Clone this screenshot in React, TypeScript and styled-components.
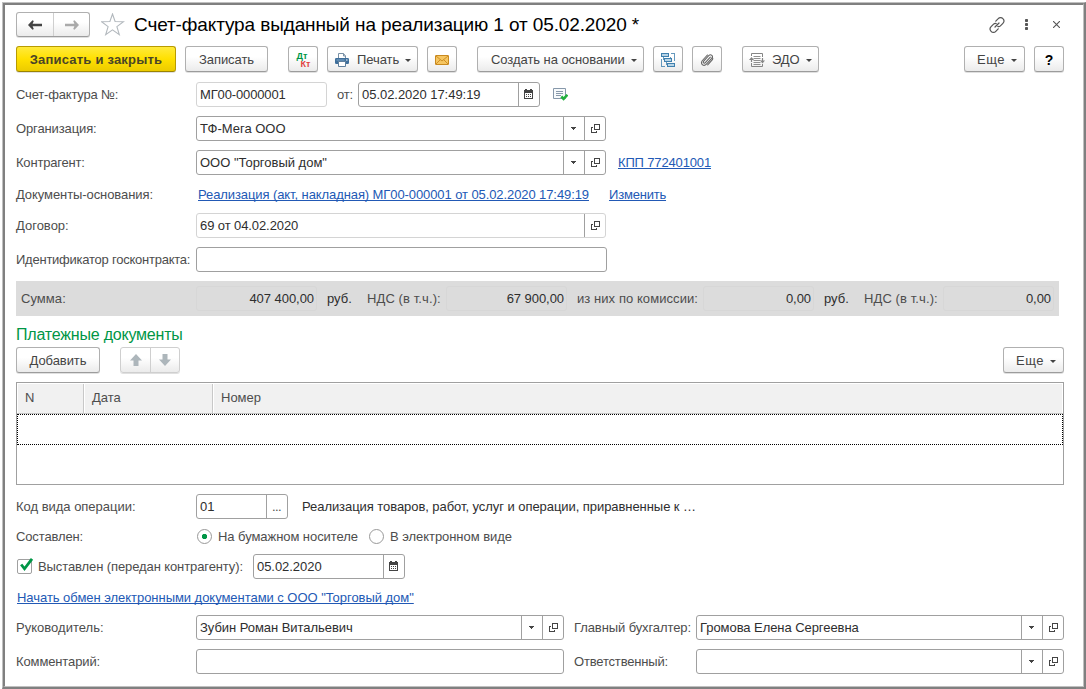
import React from "react";
import styled, { createGlobalStyle, css } from "styled-components";

const GlobalStyle = createGlobalStyle`
  * { box-sizing: border-box; }
  body { margin: 0; background: #fff; }
  button { font: inherit; color: inherit; padding: 0; margin: 0; }
`;

const LINE = "#a0a0a0";
const GREEN = "#009646";

const Page = styled.div`
  width: 1086px;
  height: 689px;
  padding: 2px 0 0 2px;
  background: #fff;
  font: 13px/16px "Liberation Sans", Arial, sans-serif;
  color: #4d4d4d;
  white-space: nowrap;
  overflow: hidden;
`;

const OuterBevel = styled.div`
  height: 100%;
  border-style: solid;
  border-width: 1px 2px 2px 1px;
  border-color: #c0c0c0 #808080 #808080 #c0c0c0;
`;

const InnerBevel = styled.div`
  height: 100%;
  border-style: solid;
  border-width: 2px 1px 1px 2px;
  border-color: #808080 #c0c0c0 #c0c0c0 #808080;
  padding: 7px 19px 0 11px;
  display: flex;
  flex-direction: column;
`;

const Text = styled.span<{ $ls?: number; $dark?: boolean }>`
  letter-spacing: ${(p) => p.$ls ?? -0.06}px;
  ${(p) => p.$dark && "color: #2e2e2e;"}
`;

const Row = styled.div<{ $h?: number; $top?: number; $drop?: number }>`
  display: flex;
  align-items: center;
  flex: none;
  height: ${(p) => p.$h ?? 25}px;
  margin-top: ${(p) => p.$top ?? 0}px;
  padding-top: ${(p) => p.$drop ?? 0}px;
`;

const Spacer = styled.div`
  flex: 1;
`;

const Gap = styled.div<{ $w: number }>`
  flex: none;
  width: ${(p) => p.$w}px;
`;

const Label = styled(Text)<{ $w?: number }>`
  flex: none;
  width: ${(p) => p.$w ?? 180}px;
`;

const Title = styled.h1`
  margin: 0 0 0 9px;
  font-size: 19px;
  font-weight: 400;
  line-height: 24px;
  letter-spacing: -0.12px;
  color: #000;
`;

const buttonFace = css`
  border: 1px solid #b0b0b0;
  border-bottom-color: #9c9c9c;
  border-radius: 3px;
  background: linear-gradient(#fff 0%, #fff 40%, #ebebeb 100%);
  box-shadow: 0 1px 0 rgba(0, 0, 0, 0.12);
`;

const Button = styled.button<{ $w: number; $primary?: boolean; $pad?: number }>`
  ${buttonFace}
  flex: none;
  display: flex;
  align-items: center;
  justify-content: ${(p) => (p.$pad === undefined ? "center" : "flex-start")};
  width: ${(p) => p.$w}px;
  height: 26px;
  padding: 1px 0 0 ${(p) => p.$pad ?? 0}px;
  color: #444;
  ${(p) =>
    p.$primary &&
    css`
      border-color: #b89b00;
      border-bottom-color: #9b8300;
      background: linear-gradient(#ffea3c 0%, #ffe000 50%, #eccb00 100%);
      font-weight: 700;
      color: #4a4528;
    `}
`;

const Split = styled.div<{ $w: number; $h: number; $soft?: boolean }>`
  ${buttonFace}
  ${(p) => p.$soft && "border-color: #cfcfcf;"}
  flex: none;
  display: grid;
  grid-template-columns: 1fr 1fr;
  width: ${(p) => p.$w}px;
  height: ${(p) => p.$h}px;
`;

const SplitPart = styled.button`
  border: 0;
  background: none;
  display: flex;
  align-items: center;
  justify-content: center;
  & + & {
    border-left: 1px solid #cfcfcf;
  }
`;

const Arrow = styled.i<{ $left: number }>`
  flex: none;
  margin: 2px 0 0 ${(p) => p.$left}px;
  border: 3px solid transparent;
  border-top-color: #444;
  border-bottom: 0;
`;

const Help = styled.b`
  font-size: 14px;
  color: #000;
`;

const DtKt = styled.div`
  display: flex;
  flex-direction: column;
  width: 17px;
  margin-right: 2px;
  font: 700 9px/8px "Liberation Sans", Arial, sans-serif;
  color: ${GREEN};
  span + span {
    align-self: flex-end;
    color: #e0433f;
  }
`;

const FieldBox = styled.div<{ $w: number; $soft?: boolean }>`
  flex: none;
  display: flex;
  width: ${(p) => p.$w}px;
  height: 25px;
  border: 1px solid ${(p) => (p.$soft ? "#d4d4d4" : LINE)};
  border-radius: 3px;
  background: #fff;
`;

const FieldValue = styled.div`
  flex: 1;
  display: flex;
  align-items: center;
  padding-left: 3px;
`;

const FieldButton = styled.button<{ $shift?: number }>`
  flex: none;
  display: flex;
  align-items: center;
  justify-content: center;
  width: 21px;
  border: 0;
  border-left: 1px solid ${LINE};
  padding-right: 1px;
  padding-left: ${(p) => p.$shift ?? 0}px;
  background: none;
`;

const Link = styled.a<{ $ls?: number }>`
  color: #2259b5;
  letter-spacing: ${(p) => p.$ls ?? -0.03}px;
  text-decoration: underline;
  text-decoration-thickness: 1px;
  text-underline-offset: 1px;
  text-decoration-skip-ink: none;
`;

const Totals = styled.div`
  flex: none;
  display: flex;
  align-items: center;
  width: 1043px;
  height: 35px;
  margin-top: 9px;
  padding-left: 5px;
  background: #dcdcdc;
`;

const Amount = styled.div<{ $w: number }>`
  flex: none;
  display: flex;
  align-items: center;
  justify-content: flex-end;
  width: ${(p) => p.$w}px;
  height: 25px;
  margin-right: 10px;
  padding-right: 2px;
  border: 1px solid #d7d7d7;
  border-radius: 3px;
  color: #2e2e2e;
`;

const SectionTitle = styled.h2`
  flex: none;
  margin: 8px 0 3px;
  height: 20px;
  font-size: 16px;
  font-weight: 400;
  line-height: 21px;
  letter-spacing: -0.2px;
  color: ${GREEN};
`;

const Table = styled.div`
  flex: none;
  height: 103px;
  margin-top: 9px;
  border: 1px solid ${LINE};
`;

const TableHead = styled.div`
  display: grid;
  grid-template-columns: 67px 129px 1fr;
  height: 31px;
  padding: 1px 1px 0 0;
  border-bottom: 1px solid #c4c4c4;
`;

const HeadCell = styled.div`
  display: flex;
  align-items: center;
  margin-left: 1px;
  padding: 0 0 2px 7px;
  background: #f1f1f1;
  border-right: 1px solid #c8c8c8;
  &:last-child {
    border-right: 0;
  }
`;

const CurrentRow = styled.div`
  height: 31px;
  border: 1px dotted #000;
`;

const Radio = styled.span<{ $on?: boolean }>`
  flex: none;
  width: 15px;
  height: 15px;
  margin-right: 6px;
  border: 1px solid #999;
  border-radius: 50%;
  background: ${(p) => (p.$on ? `radial-gradient(circle, ${GREEN} 2.3px, #fff 3px)` : "#fff")};
`;

const Checkbox = styled.span`
  flex: none;
  width: 15px;
  height: 15px;
  margin: 0 6px 0 1px;
  border: 1px solid #a0a0a0;
  border-radius: 2px;
  svg {
    display: block;
    margin: -2px 0 0 2px;
    overflow: visible;
  }
`;

const Calendar = () => (
  <svg width="9" height="11" viewBox="0 0 9 11" shapeRendering="crispEdges">
    <path d="M0 1h1V0h2v1h3V0h2v1h1v9H0z" fill="#444" />
    <path d="M1 4h7v5H1z" fill="#fff" />
    <path d="M2 5h1v1H2zm2 0h1v1H4zm2 0h1v1H6zM2 7h1v1H2zm2 0h1v1H4zm2 0h1v1H6z" fill="#444" />
  </svg>
);

const OpenIcon = () => (
  <svg width="9" height="9" viewBox="0 0 9 9" fill="#444" shapeRendering="crispEdges">
    <path fillRule="evenodd" d="M3 0h6v6H3zM4 1v4h4V1z" />
    <path d="M0 3h2v1H1v4h4V7h1v2H0z" />
  </svg>
);

const DropIcon = () => (
  <svg width="5" height="3" viewBox="0 0 5 3" shapeRendering="crispEdges">
    <path d="M0 0h5v1H4v1H3v1H2V2H1V1H0z" fill="#444" />
  </svg>
);

const NavArrow = ({ flip, color }: { flip?: boolean; color: string }) => (
  <svg width="14" height="10" viewBox="0 0 14 10">
    <path
      transform={flip ? "matrix(-1 0 0 1 14 0)" : undefined}
      d="M0 5L4.500.2 5.800 1 4.600 3.800H14v2.400H4.600L5.800 9l-1.300.8z"
      fill={color}
    />
  </svg>
);

const MoveArrow = ({ down }: { down?: boolean }) => (
  <svg width="12" height="12" viewBox="0 0 12 12">
    <path transform={down ? "rotate(180 6 6)" : undefined} d="M6 0l6 6.500H8.500V12h-5V6.500H0z" fill="#adb6bb" />
  </svg>
);

const Star = () => (
  <svg width="24" height="23" viewBox="0 0 24 23" fill="none" stroke="#b2b8bd" strokeWidth="1.1">
    <path d="M11.500 1l2.600 7.500 8.400.2-6.600 4.900 2.400 8L11.500 16.800l-6.800 4.800 2.400-8L.5 8.700l8.400-.2z" />
  </svg>
);

const ChainIcon = () => (
  <svg width="16" height="16" viewBox="0 0 16 16" fill="none" stroke="#555" strokeWidth="1.200" strokeLinecap="round">
    <path d="M6.800 4.200l2.400-2.500a3.100 3.100 0 0 1 4.700 0 3.300 3.300 0 0 1 0 4.600l-2.500 2.500c-.8.800-1.800.9-2.600.6" />
    <path d="M9.200 11.800l-2.400 2.500a3.100 3.100 0 0 1-4.700 0 3.300 3.300 0 0 1 0-4.600l2.500-2.500c.8-.8 1.800-.9 2.600-.6" />
    <path d="M6 10l4-4" />
  </svg>
);

const DotsIcon = () => (
  <svg width="3" height="11" viewBox="0 0 3 11" fill="#555">
    <rect width="3" height="3" rx=".8" />
    <rect y="4" width="3" height="3" rx=".8" />
    <rect y="8" width="3" height="3" rx=".8" />
  </svg>
);

const CloseIcon = () => (
  <svg width="7" height="7" viewBox="0 0 7 7" stroke="#555" strokeWidth="1.100">
    <path d="M0 0l7 7M7 0L0 7" />
  </svg>
);

const PrinterIcon = () => (
  <svg width="14" height="14" viewBox="0 0 14 14">
    <path d="M3.500 6V.5h5L10.500 3v3" fill="#fff" stroke="#7991a6" />
    <path d="M8.500.5V3h2" fill="none" stroke="#7991a6" />
    <rect y="5" width="14" height="6" rx="1.200" fill="#3f6f9b" />
    <path d="M1.500 7h8" stroke="#7ea6c8" />
    <path d="M11 7h1.500" stroke="#fff" />
    <path d="M3.500 8.500h7v5h-7z" fill="#fff" stroke="#5f7f9c" />
  </svg>
);

const MailIcon = () => (
  <svg width="14" height="10" viewBox="0 0 14 10" stroke="#c98a20">
    <rect x=".5" y=".5" width="13" height="9" rx=".5" fill="#f6c662" />
    <path d="M.8.8L7 6l6.200-5.200M.8 9.200l4.500-4.500M13.200 9.200L8.700 4.700" fill="none" strokeWidth=".9" />
  </svg>
);

const StructureIcon = () => (
  <svg width="14" height="14" viewBox="0 0 14 14" fill="none" stroke="#3f80ae" shapeRendering="crispEdges">
    <g fill="#b8d4e6">
      <path d="M.5.500h7v3h-7zM3.500 5.500h7v3h-7zM6.500 10.500h7v3h-7z" />
    </g>
    <path d="M10 .5h3.500V8M4 13.500H.5V6M2.500 4v3M5.500 9v3M9.500 3.500v2" strokeWidth=".8" />
  </svg>
);

const ClipIcon = () => (
  <svg width="14" height="14" viewBox="0 0 14 14" fill="none" stroke="#666" strokeWidth="1.100" strokeLinecap="round">
    <path d="M10.300 4.200l-5 5.500c-.5.600-1.300.6-1.700.2s-.4-1.100.1-1.700l5-5.500c1-1.100 2.300-1.100 3.100-.4s.8 2-.1 3.100l-5.300 5.800c-1.200 1.300-3 1.400-4.100.4s-1.100-2.800.1-4.100l5-5.500" />
    <path d="M12.300 4.500c.7.800.5 1.800-.3 2.700l-4.300 4.700" />
  </svg>
);

const ExchangeIcon = () => (
  <svg width="16" height="14" viewBox="0 0 16 14" fill="none" stroke="#858585">
    <path d="M2.500 3V.5h11V4M13.500 11v2.500h-11V10" />
    <path d="M4.500 3.500h7M4.500 5.500h7M4.500 7.500h7M4.500 9.500h7M4.500 11.500h7" strokeWidth=".9" />
    <path d="M2.500 9V5.500M13.500 5v3.500" strokeWidth="1.200" />
    <path d="M0 7l2.500-3L5 7zM11 7.500h5l-2.500 3z" fill="#858585" stroke="none" />
  </svg>
);

const PostedIcon = () => (
  <svg width="15" height="13" viewBox="0 0 15 13" fill="none">
    <path d="M.5.500h12v10H.5z" fill="#f7fafc" stroke="#8798aa" />
    <path d="M3 3.500h7M3 5.500h7M3 7.500h5" stroke="#8798aa" />
    <path d="M8.300 8.500l2.300 2.300 3.800-4" stroke="#22b03d" strokeWidth="2.600" />
  </svg>
);

const CheckMark = () => (
  <svg width="13" height="13" viewBox="0 0 13 13">
    <path d="M1.200 6.500l3.300 4.300L12 .8" fill="none" stroke={GREEN} strokeWidth="2.800" />
  </svg>
);

type FieldProps = {
  w: number;
  value?: string;
  ls?: number;
  soft?: boolean;
  drop?: boolean;
  open?: boolean;
  calendar?: boolean;
  dots?: boolean;
};

const Field = ({ w, value, ls, soft, drop, open, calendar, dots }: FieldProps) => (
  <FieldBox $w={w} $soft={soft}>
    <FieldValue>
      <Text $dark $ls={ls}>{value}</Text>
    </FieldValue>
    {drop && <FieldButton><DropIcon /></FieldButton>}
    {open && <FieldButton $shift={2}><OpenIcon /></FieldButton>}
    {calendar && <FieldButton><Calendar /></FieldButton>}
    {dots && <FieldButton><Text $ls={-0.6}>...</Text></FieldButton>}
  </FieldBox>
);

export default function App() {
  return (
    <Page>
      <GlobalStyle />
      <OuterBevel>
        <InnerBevel>
          <Row>
            <Split $w={74} $h={25}>
              <SplitPart><NavArrow color="#444" /></SplitPart>
              <SplitPart><NavArrow flip color="#aaa" /></SplitPart>
            </Split>
            <Gap $w={11} />
            <Star />
            <Title>Счет-фактура выданный на реализацию 1 от 05.02.2020 *</Title>
            <Spacer />
            <ChainIcon />
            <Gap $w={20} />
            <DotsIcon />
            <Gap $w={25} />
            <CloseIcon />
            <Gap $w={4} />
          </Row>

          <Row $h={26} $top={9}>
            <Button $w={160} $primary><Text $ls={0.21}>Записать и закрыть</Text></Button>
            <Gap $w={9} />
            <Button $w={83}><Text>Записать</Text></Button>
            <Gap $w={20} />
            <Button $w={30}><DtKt><span>Дт</span><span>Кт</span></DtKt></Button>
            <Gap $w={9} />
            <Button $w={91} $pad={7}>
              <PrinterIcon />
              <Gap $w={8} />
              <Text>Печать</Text>
              <Arrow $left={6} />
            </Button>
            <Gap $w={9} />
            <Button $w={30}><MailIcon /></Button>
            <Gap $w={20} />
            <Button $w={167} $pad={13}>
              <Text>Создать на основании</Text>
              <Arrow $left={6} />
            </Button>
            <Gap $w={9} />
            <Button $w={30}><StructureIcon /></Button>
            <Gap $w={9} />
            <Button $w={30}><ClipIcon /></Button>
            <Gap $w={20} />
            <Button $w={77} $pad={6}>
              <ExchangeIcon />
              <Gap $w={7} />
              <Text>ЭДО</Text>
              <Arrow $left={6} />
            </Button>
            <Spacer />
            <Button $w={61} $pad={12}>
              <Text $ls={0.5}>Еще</Text>
              <Arrow $left={6} />
            </Button>
            <Gap $w={9} />
            <Button $w={30}><Help>?</Help></Button>
          </Row>

          <Row $top={10}>
            <Label $ls={-0.18}>Счет-фактура №:</Label>
            <Field w={131} value="МГ00-0000001" ls={-0.14} soft />
            <Gap $w={10} />
            <Label $w={21} $ls={-0.25}>от:</Label>
            <Field w={182} value="05.02.2020 17:49:19" ls={-0.04} calendar />
            <Gap $w={13} />
            <PostedIcon />
          </Row>

          <Row $top={9}>
            <Label $ls={-0.12}>Организация:</Label>
            <Field w={410} value="ТФ-Мега ООО" ls={0} drop open />
          </Row>

          <Row $top={9}>
            <Label $ls={-0.2}>Контрагент:</Label>
            <Field w={410} value={'ООО "Торговый дом"'} ls={-0.01} drop open />
            <Gap $w={12} />
            <Link $ls={-0.15}>КПП 772401001</Link>
          </Row>

          <Row $h={38} $drop={1}>
            <Label $ls={-0.08}>Документы-основания:</Label>
            <Gap $w={2} />
            <Link $ls={-0.09}>Реализация (акт, накладная) МГ00-000001 от 05.02.2020 17:49:19</Link>
            <Gap $w={20} />
            <Link $ls={-0.2}>Изменить</Link>
          </Row>

          <Row>
            <Label $ls={0}>Договор:</Label>
            <Field w={410} value="69 от 04.02.2020" ls={-0.09} soft open />
          </Row>

          <Row $top={9}>
            <Label $ls={-0.24}>Идентификатор госконтракта:</Label>
            <Field w={411} />
          </Row>

          <Totals>
            <Label $w={175} $ls={0.06}>Сумма:</Label>
            <Amount $w={121}><Text $ls={-0.05}>407 400,00</Text></Amount>
            <Label $w={40} $ls={0} $dark>руб.</Label>
            <Label $w={79} $ls={0.1}>НДС (в т.ч.):</Label>
            <Amount $w={121}><Text>67 900,00</Text></Amount>
            <Label $w={126} $ls={0.07}>из них по комиссии:</Label>
            <Amount $w={111}><Text>0,00</Text></Amount>
            <Label $w={40} $ls={0} $dark>руб.</Label>
            <Label $w={79} $ls={0.1}>НДС (в т.ч.):</Label>
            <Amount $w={111}><Text>0,00</Text></Amount>
          </Totals>

          <SectionTitle>Платежные документы</SectionTitle>

          <Row $h={26}>
            <Button $w={84}><Text>Добавить</Text></Button>
            <Gap $w={20} />
            <Split $w={60} $h={26} $soft>
              <SplitPart><MoveArrow /></SplitPart>
              <SplitPart><MoveArrow down /></SplitPart>
            </Split>
            <Spacer />
            <Button $w={61} $pad={12}>
              <Text $ls={0.5}>Еще</Text>
              <Arrow $left={6} />
            </Button>
          </Row>

          <Table>
            <TableHead>
              <HeadCell>N</HeadCell>
              <HeadCell>Дата</HeadCell>
              <HeadCell>Номер</HeadCell>
            </TableHead>
            <CurrentRow />
          </Table>

          <Row $top={9}>
            <Label $ls={-0.02}>Код вида операции:</Label>
            <Field w={92} value="01" dots />
            <Gap $w={14} />
            <Text $dark $ls={-0.06}>Реализация товаров, работ, услуг и операции, приравненные к …</Text>
          </Row>

          <Row $h={35}>
            <Label $ls={-0.13}>Составлен:</Label>
            <Gap $w={1} />
            <Radio $on />
            <Label $w={151} $ls={-0.06}>На бумажном носителе</Label>
            <Radio />
            <Text $ls={-0.05}>В электронном виде</Text>
          </Row>

          <Row>
            <Checkbox><CheckMark /></Checkbox>
            <Label $w={215} $ls={-0.1}>Выставлен (передан контрагенту):</Label>
            <Field w={152} value="05.02.2020" ls={-0.05} calendar />
          </Row>

          <Row $h={36} $drop={1}>
            <Gap $w={1} />
            <Link $ls={-0.04}>Начать обмен электронными документами с ООО "Торговый дом"</Link>
          </Row>

          <Row>
            <Label $ls={0.02}>Руководитель:</Label>
            <Field w={368} value="Зубин Роман Витальевич" ls={-0.05} drop open />
            <Gap $w={10} />
            <Label $w={122} $ls={-0.1}>Главный бухгалтер:</Label>
            <Field w={368} value="Громова Елена Сергеевна" ls={-0.06} drop open />
          </Row>

          <Row $top={9}>
            <Label $ls={-0.12}>Комментарий:</Label>
            <Field w={368} />
            <Gap $w={10} />
            <Label $w={122} $ls={-0.18}>Ответственный:</Label>
            <Field w={368} drop open />
          </Row>
        </InnerBevel>
      </OuterBevel>
    </Page>
  );
}
